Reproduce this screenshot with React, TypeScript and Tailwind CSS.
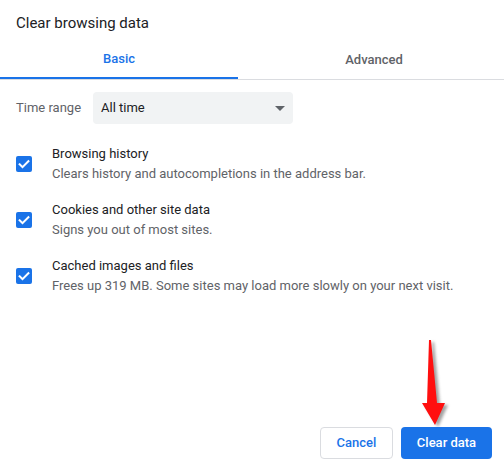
import React from "react";

const items = [
  {
    label: "Browsing history",
    sub: "Clears history and autocompletions in the address bar.",
  },
  {
    label: "Cookies and other site data",
    sub: "Signs you out of most sites.",
  },
  {
    label: "Cached images and files",
    sub: "Frees up 319 MB. Some sites may load more slowly on your next visit.",
  },
];

const Checkbox: React.FC = () => (
  <div className="mt-[12px] flex h-4 w-4 shrink-0 items-center justify-center rounded-[2px] bg-[#1a73e8]">
    <svg width="16" height="16" viewBox="0 0 16 16" fill="none">
      <path
        d="M3.6 8.3l2.9 2.9 5.9-6"
        stroke="#fff"
        strokeWidth="2"
        strokeLinecap="square"
      />
    </svg>
  </div>
);

const RedArrow: React.FC = () => (
  <svg
    className="absolute left-[410px] top-[330px]"
    width="50"
    height="105"
    viewBox="410 330 50 105"
  >
    <defs>
      <filter id="blur" x="-50%" y="-50%" width="200%" height="200%">
        <feGaussianBlur stdDeviation="1.6" />
      </filter>
    </defs>
    {/* shadow */}
    <polygon
      points="432,342 434,342 440,405 448,405 438,427 425,405 430,405"
      fill="#555"
      opacity="0.55"
      filter="url(#blur)"
    />
    <polygon
      points="429,340 431,340 437,403 445,403 435,425 422,403 427,403"
      fill="#ff0f0f"
    />
  </svg>
);

export default function App() {
  return (
    <div
      className="relative flex h-[470px] w-[504px] flex-col overflow-hidden bg-white text-[#202124]"
      style={{ fontFamily: "Roboto, 'Liberation Sans', sans-serif" }}
    >
      {/* Title */}
      <div className="px-4 pt-[14px] text-[15px] leading-[18px]">Clear browsing data</div>

      {/* Tabs */}
      <div className="mt-[5px] flex border-b border-[#dadce0]">
        <div className="flex h-[42px] w-[238px] items-center justify-center border-b-2 border-[#1a73e8] pt-[3px] text-[13px] font-medium text-[#1a73e8]">
          Basic
        </div>
        <div className="flex h-[42px] flex-1 items-center justify-center pt-[3px] pl-[6px] text-[13px] font-medium text-[#5f6368]">
          Advanced
        </div>
      </div>

      {/* Time range */}
      <div className="mt-[12px] flex items-center px-4">
        <span className="w-[77px] text-[13px] text-[#5f6368]">Time range</span>
        <div className="flex h-8 w-[200px] items-center justify-between rounded-[4px] bg-[#f1f3f4] pl-2 pr-2 text-[13px]">
          <span>All time</span>
          <svg width="10" height="5" viewBox="0 0 10 5">
            <polygon points="0,0 10,0 5,5" fill="#5f6368" />
          </svg>
        </div>
      </div>

      {/* Options */}
      <div className="mt-[20px] flex flex-col px-4">
        {items.map((item) => (
          <div key={item.label} className="flex h-[56px] items-start gap-5">
            <Checkbox />
            <div className="text-[13px] leading-5">
              <div className="text-[#202124]">{item.label}</div>
              <div className="text-[#5f6368]">{item.sub}</div>
            </div>
          </div>
        ))}
      </div>

      <div className="flex-1" />

      {/* Buttons */}
      <div className="flex justify-end gap-2 pb-[11px] pr-3">
        <button className="h-8 w-[73px] rounded-[4px] border border-[#dadce0] bg-white text-[13px] font-medium text-[#1a73e8]">
          Cancel
        </button>
        <button className="h-8 w-[91px] rounded-[4px] bg-[#1a73e8] text-[13px] font-medium text-white">
          Clear data
        </button>
      </div>

      <RedArrow />
    </div>
  );
}
